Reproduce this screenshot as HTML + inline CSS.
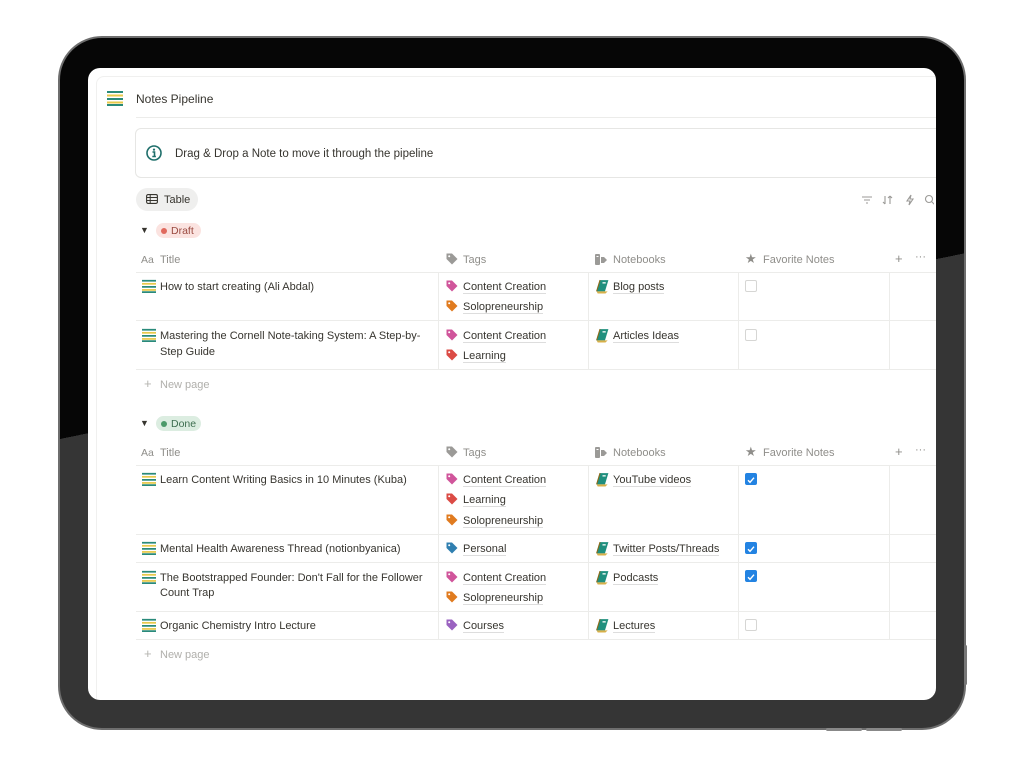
<!DOCTYPE html>
<html><head><meta charset="utf-8">
<style>
*{margin:0;padding:0;box-sizing:border-box}
body{width:1024px;height:768px;background:#fff;position:relative;overflow:hidden;font-family:"Liberation Sans",sans-serif;color:#37352f}
.bezel{position:absolute;left:58px;top:36px;width:908px;height:694px;border-radius:44px;background:linear-gradient(168.4deg,#060606 45.8%,#353535 45.8%);border:2.5px solid #6e6e6e}
.screen{position:absolute;left:88px;top:68px;width:848px;height:632px;background:#fff;border-radius:12px;overflow:hidden}
.a{position:absolute;white-space:nowrap}
.t{font-size:11px;color:#37352f;margin-top:1px}
.g{color:#8f8e8a}
.hl{position:absolute;height:1px;background:#ececea}
.vl{position:absolute;width:1px;background:#ececea}
.u{border-bottom:1px solid #ddd}
.cb{position:absolute;width:12px;height:12px;border-radius:2px}
.off{border:1px solid #d6d6d4;background:#fff}
.on{background:#2383e2}
</style></head><body>
<div class="bezel"></div>
<div style="position:absolute;left:826px;top:728px;width:36px;height:3px;background:#888;border-radius:2px"></div>
<div style="position:absolute;left:866px;top:728px;width:36px;height:3px;background:#888;border-radius:2px"></div>
<div style="position:absolute;left:964px;top:645px;width:3px;height:40px;background:#777;border-radius:2px"></div>
<div class="screen">
<div style="position:absolute;left:8px;top:8px;right:-10px;bottom:-10px;border:1px solid #f0f0ef;border-radius:8px"></div>
<div style="position:absolute;left:47px;top:60px;width:820px;height:50px;border:1px solid #e6e6e4;border-radius:6px"></div>
</div>

<svg width="0" height="0" style="position:absolute">
<defs>
<symbol id="note" viewBox="0 0 16 16"><rect x="0" y="1" width="16" height="2" fill="#2a8a7a"/><rect x="0" y="4.5" width="16" height="2" fill="#e8c94a"/><rect x="0" y="8" width="16" height="2" fill="#2a8a7a"/><rect x="0" y="11.5" width="16" height="2" fill="#e8c94a"/><rect x="0" y="14" width="16" height="2" fill="#2a8a7a"/></symbol>
<symbol id="tag" viewBox="0 0 12 12"><path d="M0.5 0.5h5.5l5.5 5.5-5.5 5.5-5.5-5.5z" /><circle cx="3.2" cy="3.2" r="1" fill="#fff"/></symbol>
<symbol id="book" viewBox="0 0 14 14"><path d="M1.5 11.5l3.2-10.5h7.8l-3.2 10.5z" fill="#1f8f7e"/><path d="M1.5 11.5l1 2h7.3l2-2z" fill="#d8b04a"/><path d="M1.5 11.5l3.2-10.5" stroke="#8a6a1a" stroke-width="1"/><rect x="7" y="3" width="3" height="1.2" fill="#fff"/></symbol>
</defs></svg>

<!-- header -->
<svg class="a" style="left:107px;top:90px" width="16" height="16"><use href="#note"/></svg>
<div class="a" style="left:136px;top:92px;font-size:12px;color:#37352f">Notes Pipeline</div>
<div class="hl" style="left:136px;top:117px;width:800px"></div>

<!-- callout -->
<svg class="a" style="left:146px;top:145px" width="16" height="16" viewBox="0 0 16 16"><circle cx="8" cy="8" r="7" fill="none" stroke="#1e6e6a" stroke-width="1.6"/><circle cx="8" cy="4.6" r="1.1" fill="#1e6e6a"/><path d="M6.5 7h2v4.5M6.3 11.5h3.6" stroke="#1e6e6a" stroke-width="1.6" fill="none"/></svg>
<div class="a t" style="left:175px;top:147px;font-size:11.5px">Drag &amp; Drop a Note to move it through the pipeline</div>

<!-- tab -->
<div style="position:absolute;left:136px;top:188px;width:62px;height:23px;background:#efefee;border-radius:12px"></div>
<svg class="a" style="left:146px;top:194px" width="12" height="10" viewBox="0 0 12 10"><rect x="0.6" y="0.6" width="10.8" height="8.8" rx="1.5" fill="none" stroke="#37352f" stroke-width="1.1"/><path d="M0.6 3.5h10.8M0.6 6.5h10.8M4.2 0.6v8.8" stroke="#37352f" stroke-width="1"/></svg>
<div class="a t" style="left:164px;top:193px">Table</div>
<!-- toolbar -->
<svg class="a" style="left:862px;top:194px" width="72" height="12" viewBox="0 0 72 12" fill="none" stroke="#9b9a97" stroke-width="1.1"><path d="M0 3h10M2 6h6M4 9h2"/><path d="M23 2v8M21 8l2 2M28 10V2M26 4l2-2M30 4l-2-2"/><path d="M49 1l-4 6h3l-1 4 4-6h-3z"/><circle cx="67" cy="5" r="3.5"/><path d="M69.5 7.5l3 3"/></svg>

<!-- Draft group -->
<div class="a" style="left:140px;top:225px;font-size:9px">▼</div>
<div style="position:absolute;left:156px;top:223px;width:45px;height:15px;background:#fbe3e0;border-radius:8px"></div>
<div style="position:absolute;left:161px;top:228px;width:6px;height:6px;border-radius:50%;background:#e0695d"></div>
<div class="a" style="left:171px;top:225px;font-size:10.5px;color:#9a4a40">Draft</div>

<!-- header row (draft) -->
<div class="a g" style="left:141px;top:254px;font-size:10.5px">Aa</div>
<div class="a t g" style="left:160px;top:253px">Title</div>
<svg class="a" style="left:446px;top:253px;fill:#9b9a97" width="12" height="12"><use href="#tag"/></svg>
<div class="a t g" style="left:463px;top:253px">Tags</div>
<svg class="a" style="left:595px;top:254px" width="12" height="11" viewBox="0 0 12 11" fill="#9b9a97"><rect x="0" y="0" width="5" height="11" rx="1"/><rect x="1.5" y="2" width="2" height="1" fill="#fff"/><path d="M6 3h3l3 3-3 3H6z"/></svg>
<div class="a t g" style="left:613px;top:253px">Notebooks</div>
<div class="a g" style="left:745px;top:251px;font-size:13px">★</div>
<div class="a t g" style="left:763px;top:253px">Favorite Notes</div>
<div class="a g" style="left:895px;top:251px;font-size:13px">+</div>
<div class="a g" style="left:915px;top:251px;font-size:11px">···</div>
<div class="hl" style="left:136px;top:272px;width:800px"></div>

<!-- draft rows -->
<svg class="a" style="left:142px;top:279px" width="14" height="14"><use href="#note"/></svg>
<div class="a t" style="left:160px;top:280px">How to start creating (Ali Abdal)</div>
<svg class="a" style="left:446px;top:280px;fill:#d0559b" width="12" height="12"><use href="#tag"/></svg>
<div class="a t u" style="left:463px;top:280px">Content Creation</div>
<svg class="a" style="left:446px;top:300px;fill:#e07b1f" width="12" height="12"><use href="#tag"/></svg>
<div class="a t u" style="left:463px;top:300px">Solopreneurship</div>
<svg class="a" style="left:595px;top:279px" width="15" height="15"><use href="#book"/></svg>
<div class="a t u" style="left:613px;top:280px">Blog posts</div>
<div class="cb off" style="left:745px;top:280px"></div>
<div class="hl" style="left:136px;top:320px;width:800px"></div>

<svg class="a" style="left:142px;top:328px" width="14" height="14"><use href="#note"/></svg>
<div class="a t" style="left:160px;top:329px">Mastering the Cornell Note-taking System: A Step-by-</div>
<div class="a t" style="left:160px;top:345px">Step Guide</div>
<svg class="a" style="left:446px;top:329px;fill:#d0559b" width="12" height="12"><use href="#tag"/></svg>
<div class="a t u" style="left:463px;top:329px">Content Creation</div>
<svg class="a" style="left:446px;top:349px;fill:#db4b45" width="12" height="12"><use href="#tag"/></svg>
<div class="a t u" style="left:463px;top:349px">Learning</div>
<svg class="a" style="left:595px;top:328px" width="15" height="15"><use href="#book"/></svg>
<div class="a t u" style="left:613px;top:329px">Articles Ideas</div>
<div class="cb off" style="left:745px;top:329px"></div>
<div class="hl" style="left:136px;top:369px;width:800px"></div>
<div class="vl" style="left:438px;top:272px;height:97px"></div>
<div class="vl" style="left:588px;top:272px;height:97px"></div>
<div class="vl" style="left:738px;top:272px;height:97px"></div>
<div class="vl" style="left:889px;top:272px;height:97px"></div>
<div class="a g" style="left:144px;top:376px;font-size:13px;color:#b5b4b0">+</div>
<div class="a t" style="left:160px;top:378px;color:#b0afab">New page</div>

<!-- Done group -->
<div class="a" style="left:140px;top:418px;font-size:9px">▼</div>
<div style="position:absolute;left:156px;top:416px;width:45px;height:15px;background:#dcede1;border-radius:8px"></div>
<div style="position:absolute;left:161px;top:421px;width:6px;height:6px;border-radius:50%;background:#4c9a6a"></div>
<div class="a" style="left:171px;top:418px;font-size:10.5px;color:#3e6e50">Done</div>

<div class="a g" style="left:141px;top:447px;font-size:10.5px">Aa</div>
<div class="a t g" style="left:160px;top:446px">Title</div>
<svg class="a" style="left:446px;top:446px;fill:#9b9a97" width="12" height="12"><use href="#tag"/></svg>
<div class="a t g" style="left:463px;top:446px">Tags</div>
<svg class="a" style="left:595px;top:447px" width="12" height="11" viewBox="0 0 12 11" fill="#9b9a97"><rect x="0" y="0" width="5" height="11" rx="1"/><rect x="1.5" y="2" width="2" height="1" fill="#fff"/><path d="M6 3h3l3 3-3 3H6z"/></svg>
<div class="a t g" style="left:613px;top:446px">Notebooks</div>
<div class="a g" style="left:745px;top:444px;font-size:13px">★</div>
<div class="a t g" style="left:763px;top:446px">Favorite Notes</div>
<div class="a g" style="left:895px;top:444px;font-size:13px">+</div>
<div class="a g" style="left:915px;top:444px;font-size:11px">···</div>
<div class="hl" style="left:136px;top:465px;width:800px"></div>

<!-- done rows -->
<svg class="a" style="left:142px;top:472px" width="14" height="14"><use href="#note"/></svg>
<div class="a t" style="left:160px;top:473px">Learn Content Writing Basics in 10 Minutes (Kuba)</div>
<svg class="a" style="left:446px;top:473px;fill:#d0559b" width="12" height="12"><use href="#tag"/></svg>
<div class="a t u" style="left:463px;top:473px">Content Creation</div>
<svg class="a" style="left:446px;top:493px;fill:#db4b45" width="12" height="12"><use href="#tag"/></svg>
<div class="a t u" style="left:463px;top:493px">Learning</div>
<svg class="a" style="left:446px;top:514px;fill:#e07b1f" width="12" height="12"><use href="#tag"/></svg>
<div class="a t u" style="left:463px;top:514px">Solopreneurship</div>
<svg class="a" style="left:595px;top:472px" width="15" height="15"><use href="#book"/></svg>
<div class="a t u" style="left:613px;top:473px">YouTube videos</div>
<div class="cb on" style="left:745px;top:473px"><svg width="12" height="12"><path d="M3 6.3l2 2 4-4.6" stroke="#fff" stroke-width="1.4" fill="none"/></svg></div>
<div class="hl" style="left:136px;top:534px;width:800px"></div>

<svg class="a" style="left:142px;top:541px" width="14" height="14"><use href="#note"/></svg>
<div class="a t" style="left:160px;top:542px">Mental Health Awareness Thread (notionbyanica)</div>
<svg class="a" style="left:446px;top:542px;fill:#2f7fb0" width="12" height="12"><use href="#tag"/></svg>
<div class="a t u" style="left:463px;top:542px">Personal</div>
<svg class="a" style="left:595px;top:541px" width="15" height="15"><use href="#book"/></svg>
<div class="a t u" style="left:613px;top:542px">Twitter Posts/Threads</div>
<div class="cb on" style="left:745px;top:542px"><svg width="12" height="12"><path d="M3 6.3l2 2 4-4.6" stroke="#fff" stroke-width="1.4" fill="none"/></svg></div>
<div class="hl" style="left:136px;top:562px;width:800px"></div>

<svg class="a" style="left:142px;top:570px" width="14" height="14"><use href="#note"/></svg>
<div class="a t" style="left:160px;top:571px">The Bootstrapped Founder: Don't Fall for the Follower</div>
<div class="a t" style="left:160px;top:586px">Count Trap</div>
<svg class="a" style="left:446px;top:571px;fill:#d0559b" width="12" height="12"><use href="#tag"/></svg>
<div class="a t u" style="left:463px;top:571px">Content Creation</div>
<svg class="a" style="left:446px;top:591px;fill:#e07b1f" width="12" height="12"><use href="#tag"/></svg>
<div class="a t u" style="left:463px;top:591px">Solopreneurship</div>
<svg class="a" style="left:595px;top:570px" width="15" height="15"><use href="#book"/></svg>
<div class="a t u" style="left:613px;top:571px">Podcasts</div>
<div class="cb on" style="left:745px;top:570px"><svg width="12" height="12"><path d="M3 6.3l2 2 4-4.6" stroke="#fff" stroke-width="1.4" fill="none"/></svg></div>
<div class="hl" style="left:136px;top:611px;width:800px"></div>

<svg class="a" style="left:142px;top:618px" width="14" height="14"><use href="#note"/></svg>
<div class="a t" style="left:160px;top:619px">Organic Chemistry Intro Lecture</div>
<svg class="a" style="left:446px;top:619px;fill:#9a62c0" width="12" height="12"><use href="#tag"/></svg>
<div class="a t u" style="left:463px;top:619px">Courses</div>
<svg class="a" style="left:595px;top:618px" width="15" height="15"><use href="#book"/></svg>
<div class="a t u" style="left:613px;top:619px">Lectures</div>
<div class="cb off" style="left:745px;top:619px"></div>
<div class="hl" style="left:136px;top:639px;width:800px"></div>
<div class="vl" style="left:438px;top:465px;height:174px"></div>
<div class="vl" style="left:588px;top:465px;height:174px"></div>
<div class="vl" style="left:738px;top:465px;height:174px"></div>
<div class="vl" style="left:889px;top:465px;height:174px"></div>
<div class="a g" style="left:144px;top:646px;font-size:13px;color:#b5b4b0">+</div>
<div class="a t" style="left:160px;top:648px;color:#b0afab">New page</div>
</body></html>
